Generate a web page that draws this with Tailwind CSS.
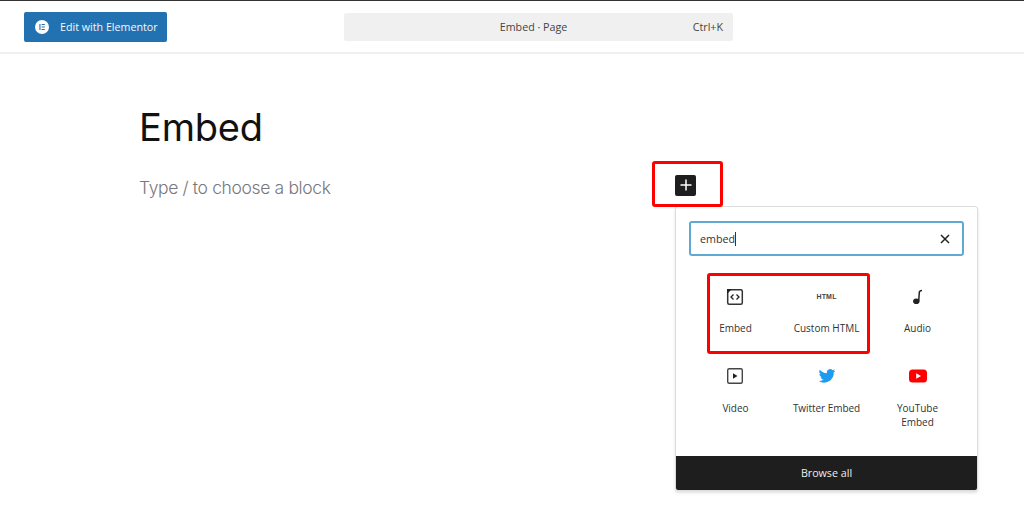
<!DOCTYPE html>
<html lang="en">
<head>
  <meta charset="UTF-8">
  <title>Embed</title>
  <script src="https://cdn.jsdelivr.net/npm/@tailwindcss/browser@4"></script>
</head>
<body class="bg-white font-['Open_Sans',sans-serif]">
  <div class="relative w-[1024px] h-[530px] overflow-hidden">
    <!-- Top bar -->
    <header class="h-[54px] border-t border-t-[#333] border-b-2 border-b-[#f0f0f0] flex items-center relative">
      <button class="ml-6 w-[143px] h-[30px] bg-[#2271b1] rounded-[2px] flex items-center pl-[11px] gap-[11px] text-[#f4f8fb] text-[10.7px] leading-none">
        <svg width="14" height="14" viewBox="0 0 14 14"><circle cx="7" cy="7" r="7" fill="#fff"/><path d="M4.400 4h1.100v6H4.400zM6.600 4h3.200v1.100H6.600zM6.600 6.450h3.200v1.100H6.600zM6.600 8.900h3.200V10H6.600z" fill="#2271b1"/></svg>
        <span class="pt-px">Edit with Elementor</span>
      </button>
      <div class="absolute left-[344px] top-[12px] w-[389px] h-[28px] bg-[#f0f0f0] rounded-[2px] flex items-center justify-center pr-[10px] text-[#444] text-[10.7px]">
        Embed · Page
        <span class="absolute right-[10px]">Ctrl+K</span>
      </div>
    </header>

    <!-- Editor canvas -->
    <main class="pl-[139px] pt-[48px]">
      <h1 class="font-['Inter',sans-serif] text-[38px] leading-[50px] text-[#111] tracking-[-0.2px]">Embed</h1>
      <div class="mt-[24px] flex items-center h-[24px] w-[557px] justify-between">
        <p class="font-['Inter',sans-serif] font-light text-[17.5px] text-[#77777d] tracking-[-0.36px]">Type / to choose a block</p>
        <button class="w-[21px] h-[21px] bg-[#1e1e1e] rounded-[2px] flex items-center justify-center mt-[-6px]">
          <svg width="12" height="12" viewBox="0 0 12 12"><path d="M6 .5v11M.5 6h11" stroke="#fff" stroke-width="1.500"/></svg>
        </button>
      </div>
    </main>

    <!-- Block inserter popover -->
    <div class="absolute left-[675px] top-[206px] w-[303px] h-[285px] bg-white border border-[#ddd] rounded-[3px] shadow-[0_2px_3px_rgba(0,0,0,0.12)] flex flex-col overflow-hidden">
      <div class="mx-[13px] mt-[14px] h-[35px] border-2 border-[#5fa9d2] rounded-[3px] flex items-center justify-between pl-[9px] pr-[12px] text-[#333] text-[10.7px]">
        <span class="flex items-center pt-px">embed<span class="w-px h-[14px] bg-[#333]"></span></span>
        <svg width="10" height="10" viewBox="0 0 10 10"><path d="M1 1l8 8M9 1l-8 8" stroke="#222" stroke-width="1.500"/></svg>
      </div>
      <div class="grid grid-cols-[91px_91px_91px] auto-rows-[79px] px-[14px] pt-[32px] text-[10px] leading-[14px] text-[#333] text-center flex-1">
        <div class="flex flex-col items-center gap-[15px]">
          <svg class="h-[18px] ml-[-1px]" width="18" height="18" viewBox="0 0 18 18"><rect x="1.700" y="1.700" width="14.600" height="14.600" rx="1.500" fill="none" stroke="#333" stroke-width="1.500"/><path d="M1 6V1h5z" fill="#222"/><path d="M7.500 6.500L5 9l2.500 2.500M10.500 6.500L13 9l-2.500 2.500" fill="none" stroke="#222" stroke-width="1.300"/></svg>
          <span>Embed</span>
        </div>
        <div class="flex flex-col items-center gap-[15px]">
          <span class="h-[18px] flex items-center font-['Liberation_Sans',sans-serif] font-bold text-[7px] tracking-[0.2px] text-[#444]">HTML</span>
          <span>Custom HTML</span>
        </div>
        <div class="flex flex-col items-center gap-[15px]">
          <svg class="h-[18px]" width="18" height="18" viewBox="0 0 18 18"><ellipse cx="7.300" cy="13.200" rx="3.200" ry="2.800" fill="#222"/><path d="M9.700 13L10.300 4.500q.2-2 2.700-2" fill="none" stroke="#222" stroke-width="1.500"/></svg>
          <span>Audio</span>
        </div>
        <div class="flex flex-col items-center gap-[16px]">
          <svg class="h-[18px] ml-[-1px]" width="18" height="18" viewBox="0 0 18 18"><rect x="1.700" y="1.700" width="14.600" height="14.600" rx="1.500" fill="none" stroke="#444" stroke-width="1.400"/><path d="M7 6.200L11.500 9 7 11.800z" fill="#222"/></svg>
          <span>Video</span>
        </div>
        <div class="flex flex-col items-center gap-[16px]">
          <svg class="h-[18px]" width="18" height="18" viewBox="0 0 24 24"><path d="M23 4.900c-.8.400-1.700.6-2.600.7.900-.6 1.600-1.400 2-2.500-.9.500-1.900.9-2.900 1.100A4.500 4.500 0 0 0 11.800 8.300 12.900 12.900 0 0 1 2.500 3.500a4.500 4.500 0 0 0 1.400 6.100c-.7 0-1.400-.2-2-.6 0 2.200 1.500 4.100 3.600 4.500-.7.200-1.400.2-2 .1.600 1.800 2.300 3.100 4.300 3.200A9.100 9.100 0 0 1 1 18.600 12.900 12.900 0 0 0 21 7.100c.9-.6 1.600-1.400 2-2.200z" fill="#1d9bf0"/></svg>
          <span class="tracking-[-0.05px]">Twitter Embed</span>
        </div>
        <div class="flex flex-col items-center gap-[16px]">
          <svg class="h-[18px]" width="18" height="18" viewBox="0 0 18 18"><rect y="2.500" width="18" height="13" rx="3.500" fill="#f00"/><path d="M7.200 6.300L12 9l-4.800 2.700z" fill="#fff"/></svg>
          <span class="w-[60px]">YouTube Embed</span>
        </div>
      </div>
      <div class="h-[34px] bg-[#1e1e1e] text-[#eee] text-[10.7px] flex items-center justify-center">Browse all</div>
    </div>

    <!-- Red annotation boxes -->
    <div class="absolute left-[652px] top-[161px] w-[71px] h-[46px] border-[3px] border-[#f00] rounded-[3px]"></div>
    <div class="absolute left-[707px] top-[273px] w-[163px] h-[81px] border-[3px] border-[#f00] rounded-[3px]"></div>
  </div>
</body>
</html>
